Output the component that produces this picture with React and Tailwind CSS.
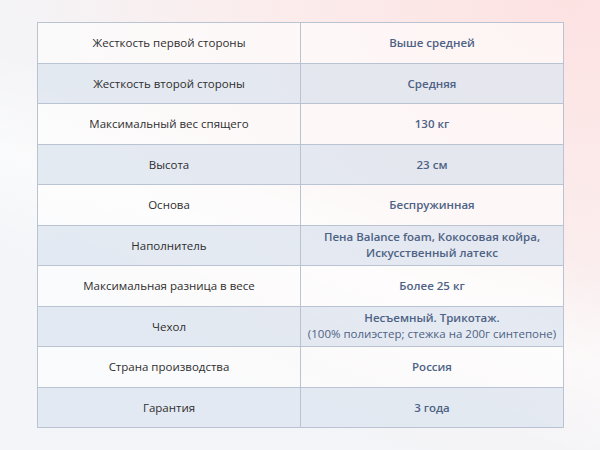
const rows = [
  ['Жесткость первой стороны', 'Выше средней'],
  ['Жесткость второй стороны', 'Средняя'],
  ['Максимальный вес спящего', '130 кг'],
  ['Высота', '23 см'],
  ['Основа', 'Беспружинная'],
  ['Наполнитель', ['Пена Balance foam, Кокосовая койра,', 'Искусственный латекс']],
  ['Максимальная разница в весе', 'Более 25 кг'],
  ['Чехол', 'cover'],
  ['Страна производства', 'Россия'],
  ['Гарантия', '3 года'],
];

function Value({ v }) {
  if (v === 'cover') {
    return (
      <div className="leading-[16px]">
        <div className="font-semibold">Несъемный. Трикотаж.</div>
        <div className="font-normal">(100% полиэстер; стежка на 200г синтепоне)</div>
      </div>
    );
  }
  if (Array.isArray(v)) {
    return (
      <div className="font-semibold leading-[16px]">
        {v.map((l) => (
          <div key={l}>{l}</div>
        ))}
      </div>
    );
  }
  return <div className="font-semibold">{v}</div>;
}

export default function App() {
  return (
    <div
      className="relative w-[600px] h-[450px] overflow-hidden bg-[#f3f5f8]"
      style={{ fontFamily: '"Open Sans", "Noto Sans", sans-serif' }}
    >
      <div className="absolute inset-0 bg-[radial-gradient(ellipse_at_95%_0%,#fde2e2_0%,#fbeded_40%,rgba(243,245,248,0)_75%)]"></div>
      <div className="absolute inset-0 bg-[linear-gradient(200deg,rgba(255,255,255,0)_40%,rgba(255,255,255,0.6)_55%,rgba(255,255,255,0)_70%)]"></div>

      <div className="relative pt-[22px] pl-[37px]">
        <table className="w-[527px] border-collapse text-[11.5px]">
          <tbody>
            {rows.map(([k, v], i) => (
              <tr
                key={k}
                className={i % 2 === 0 ? 'bg-white/60' : 'bg-[#dfe6f0]/80'}
              >
                <td className="w-[263px] h-[40.5px] p-0 border border-[#b9c3d2] text-center text-[#2e2e2e]">
                  {k}
                </td>
                <td className="h-[40.5px] p-0 border border-[#b9c3d2] text-center text-[#4d6284]">
                  <Value v={v} />
                </td>
              </tr>
            ))}
          </tbody>
        </table>
      </div>
    </div>
  );
}
